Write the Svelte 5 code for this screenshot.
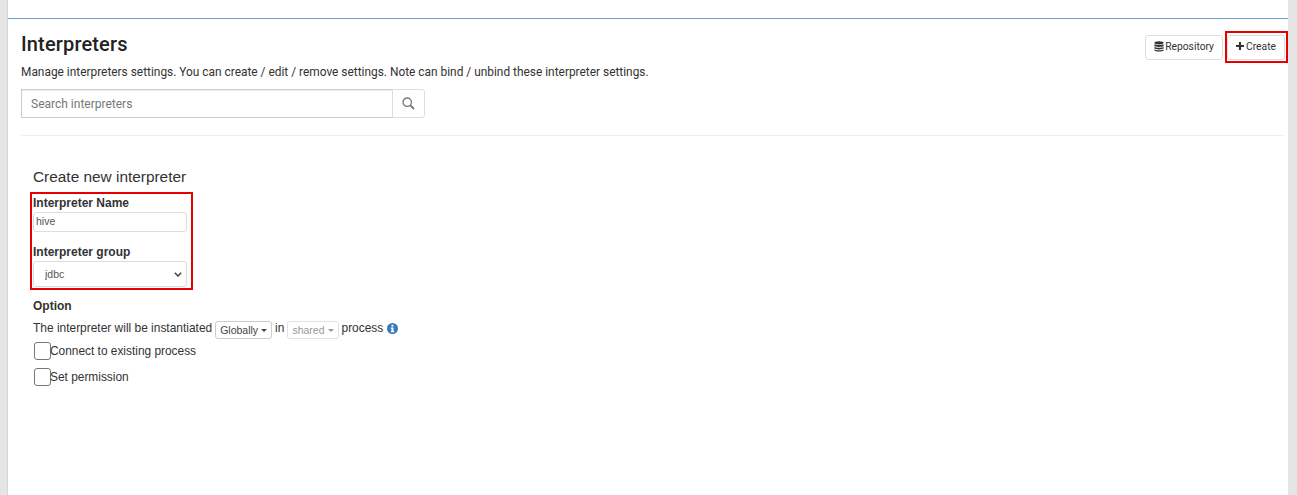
<script>
  let name = 'hive';
  let group = 'jdbc';
</script>

<div class="page">
  <main class="panel">
    <header class="head">
      <div class="head-left">
        <h3>Interpreters</h3>
        <p class="desc">Manage interpreters settings. You can create / edit / remove settings. Note can bind / unbind these interpreter settings.</p>
        <div class="search">
          <input type="text" placeholder="Search interpreters" />
          <button class="search-btn" aria-label="Search">
            <svg width="13" height="13" viewBox="0 0 13 13" fill="none" stroke="#777" stroke-width="1.3">
              <circle cx="5.200" cy="5.200" r="4.200" />
              <path d="M8.200 8.200 12 12" stroke-width="1.900" />
            </svg>
          </button>
        </div>
      </div>
      <div class="actions">
        <button class="btn">
          <svg width="10" height="11" viewBox="0 0 10 11" fill="#333">
            <ellipse cx="5" cy="1.800" rx="4.600" ry="1.600" />
            <path d="M.4 3.300C1.400 4.300 8.600 4.300 9.600 3.300V5C8.600 6.200 1.400 6.200 .4 5Z" />
            <path d="M.4 6C1.400 7 8.600 7 9.600 6V7.600C8.600 8.700 1.400 8.700 .4 7.600Z" />
            <path d="M.4 8.500C1.400 9.500 8.600 9.500 9.600 8.500V9.400C8.600 10.900 1.400 10.900 .4 9.400Z" />
          </svg>
          Repository
        </button>
        <div class="marked create-mark">
          <button class="btn">
            <svg class="plus" width="8" height="8" viewBox="0 0 9 9" fill="#333"><path d="M3.300 0H5.700V3.300H9V5.700H5.700V9H3.300V5.700H0V3.300H3.300Z" /></svg>
            Create
          </button>
        </div>
      </div>
    </header>

    <hr />

    <section class="form">
      <h4>Create new interpreter</h4>
      <div class="marked fields">
        <label class="field" for="iname">Interpreter Name</label>
        <input id="iname" class="control" type="text" bind:value={name} />
        <label class="field second" for="igroup">Interpreter group</label>
        <select id="igroup" class="control select" bind:value={group}>
          <option value="jdbc">jdbc</option>
          <option value="hive">hive</option>
        </select>
      </div>

      <h5>Option</h5>
      <div class="instantiate">
        The interpreter will be instantiated
        <span class="drop">Globally <i class="caret"></i></span>
        in
        <span class="drop off">shared <i class="caret"></i></span>
        process
        <svg class="info" width="11" height="11" viewBox="0 0 11 11">
          <circle cx="5.500" cy="5.500" r="5.500" fill="#337ab7" />
          <rect x="4.500" y="1.800" width="2" height="1.800" fill="#fff" />
          <path d="M3.800 4.500H6.500V8H7.300V9.200H3.800V8H4.500V5.700H3.800Z" fill="#fff" />
        </svg>
      </div>
      <label class="check"><input type="checkbox" />Connect to existing process</label>
      <label class="check"><input type="checkbox" />Set permission</label>
    </section>
  </main>
</div>

<style>
  :global(body) {
    margin: 0;
    background: #fff;
  }

  .page {
    height: 495px;
    overflow: hidden;
    background: #e5e5e5;
    padding: 0 9px 0 7px;
    box-sizing: border-box;
  }

  .panel {
    height: 100%;
    background: #fff;
    border-left: 1px solid #d5d5d5;
    box-sizing: border-box;
    padding-top: 18px;
    font-family: Roboto, sans-serif;
    color: #333;
  }

  .head {
    display: flex;
    justify-content: space-between;
    border-top: 1px solid #6a9fd0;
    padding-left: 13px;
  }

  h3 {
    margin: 14px 0 0;
    font-size: 20px;
    line-height: 22px;
    font-weight: 500;
    letter-spacing: 0.15px;
    color: #222;
  }

  .desc {
    margin: 8px 0 0;
    font-size: 11.900px;
    line-height: 18px;
    color: #333;
  }

  .search {
    display: flex;
    margin-top: 8px;
    width: 404px;
    height: 29px;
  }

  .search input {
    flex: 1;
    min-width: 0;
    box-sizing: border-box;
    border: 1px solid #ccc;
    box-shadow: inset 0 1px 1px rgba(0, 0, 0, 0.075);
    padding: 0 9px;
    font-family: Roboto, sans-serif;
    font-size: 12px;
    outline: none;
  }

  .search input::placeholder {
    color: #777;
    opacity: 1;
  }

  .search-btn {
    width: 33px;
    margin-left: -1px;
    background: #fff;
    border: 1px solid #ddd;
    border-radius: 0 3px 3px 0;
    padding: 2px 0 0;
  }

  .actions {
    display: flex;
    align-items: center;
    align-self: flex-start;
    margin-top: 12px;
    gap: 2px;
  }

  .btn {
    height: 25px;
    display: inline-flex;
    align-items: center;
    gap: 1px;
    padding: 0 8px 2px;
    background: #fff;
    border: 1px solid #ddd;
    border-radius: 3px;
    font-family: Roboto, sans-serif;
    font-size: 10.300px;
    color: #333;
  }

  .plus {
    margin-right: 1px;
  }

  .marked {
    border: 2px solid #e60000;
    box-sizing: border-box;
  }

  .create-mark {
    width: 63px;
    height: 32px;
    display: flex;
    align-items: center;
  }

  hr {
    border: 0;
    border-top: 1px solid #eee;
    margin: 17px 4px 0 13px;
  }

  .form {
    padding-left: 22px;
    font-family: "Liberation Sans", Arial, sans-serif;
    font-size: 12px;
    color: #333;
  }

  h4 {
    margin: 32px 0 0 3px;
    font-size: 15.400px;
    line-height: 18px;
    font-weight: 400;
  }

  .fields {
    width: 163px;
    height: 98px;
    margin-top: 6px;
    padding: 1px 4px 0 1px;
  }

  .field {
    display: block;
    font-size: 12px;
    font-weight: 700;
    line-height: 17px;
  }

  .second {
    margin-top: 12px;
  }

  .control {
    display: block;
    width: 100%;
    box-sizing: border-box;
    background: #fff;
    border: 1px solid #ddd;
    border-radius: 3px;
    color: #555;
    font-family: "Liberation Sans", Arial, sans-serif;
    font-size: 10.500px;
    height: 20px;
    padding: 0 2px 2px;
    outline: none;
  }

  .select {
    appearance: none;
    height: 26px;
    padding: 0 2px 0 11px;
    background: #fff url("data:image/svg+xml,%3Csvg xmlns='http://www.w3.org/2000/svg' width='8' height='5' viewBox='0 0 8 5'%3E%3Cpath d='M.8.800 4 4 7.200.8' fill='none' stroke='%23444' stroke-width='1.500'/%3E%3C/svg%3E") no-repeat right 4px center;
  }

  h5 {
    margin: 8px 0 0 3px;
    font-size: 12px;
    line-height: 17px;
    font-weight: 700;
  }

  .instantiate {
    display: flex;
    align-items: center;
    gap: 3px;
    margin: 4px 0 0 3px;
    height: 18px;
    line-height: 18px;
    font-size: 11.950px;
  }

  .drop {
    display: inline-flex;
    align-items: center;
    gap: 3px;
    height: 18px;
    margin-top: 4px;
    padding: 0 4px;
    box-sizing: border-box;
    border: 1px solid #ccc;
    border-radius: 3px;
    font-size: 10.500px;
    color: #444;
  }

  .drop.off {
    color: #999;
    border-color: #e2e2e2;
  }

  .caret {
    width: 0;
    height: 0;
    border-left: 3.500px solid transparent;
    border-right: 3.500px solid transparent;
    border-top: 3.500px solid currentColor;
  }

  .info {
    margin-left: 1px;
  }

  .check {
    display: flex;
    align-items: center;
    margin: 5px 0 0 3px;
    height: 18px;
    line-height: 18px;
    font-size: 11.900px;
  }

  .check + .check {
    margin-top: 8px;
  }

  .check input {
    appearance: none;
    width: 17px;
    height: 18px;
    margin: 0 -1px 0 1px;
    background: #fff;
    border: 1px solid #777;
    border-radius: 3px;
    box-sizing: border-box;
  }
</style>
